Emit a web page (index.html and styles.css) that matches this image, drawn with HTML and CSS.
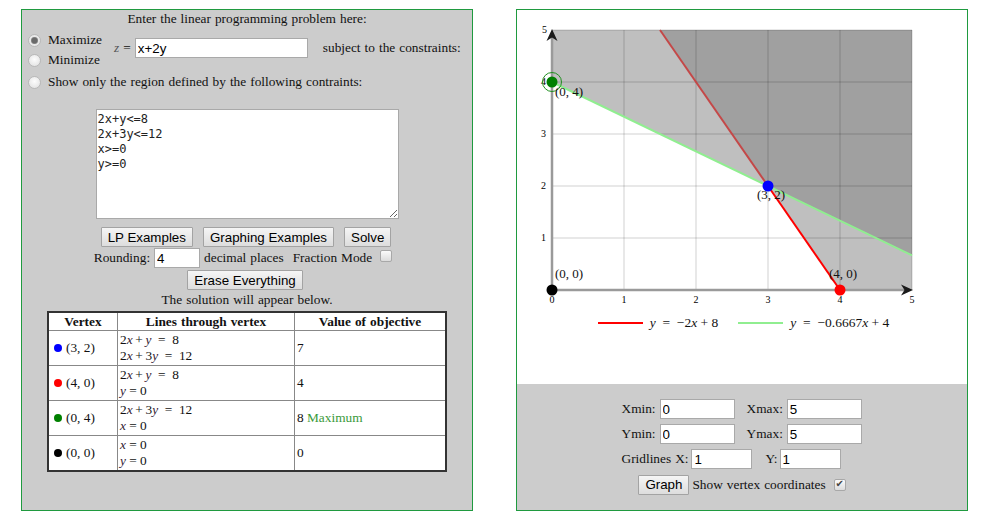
FILE: index.html
```html
<!DOCTYPE html>
<html lang="en">
<head>
    <meta charset="UTF-8">
    <title>Linear Programming Grapher</title>
    <link rel="stylesheet" href="styles.css">
</head>
<body>
<div class="page">

    <!-- Problem entry and solution table -->
    <div class="panel lp-panel">
        <div class="title">Enter the linear programming problem here:</div>

        <div class="objective-row">
            <div class="mode-choice">
                <label class="radio-line"><input type="radio" name="mode" checked>Maximize</label>
                <label class="radio-line"><input type="radio" name="mode">Minimize</label>
            </div>
            <span class="z-label"><i>z</i> =</span>
            <input type="text" class="objective" value="x+2y">
            <span class="subject">subject to the constraints:</span>
        </div>

        <label class="radio-line region-only"><input type="radio" name="mode">Show only the region defined by the following contraints:</label>

        <textarea class="constraints" spellcheck="false">2x+y<=8
2x+3y<=12
x>=0
y>=0</textarea>

        <div class="button-row">
            <button>LP Examples</button>
            <button>Graphing Examples</button>
            <button>Solve</button>
        </div>

        <div class="rounding-row">
            <span>Rounding:</span>
            <input type="text" class="rounding" value="4">
            <span>decimal places</span>
            <span class="fraction-label">Fraction Mode</span>
            <input type="checkbox" class="check">
        </div>

        <div class="erase-row">
            <button>Erase Everything</button>
        </div>

        <div class="note">The solution will appear below.</div>

        <table class="solution">
            <tr>
                <th class="col-vertex">Vertex</th>
                <th class="col-lines">Lines through vertex</th>
                <th>Value of objective</th>
            </tr>
            <tr>
                <td><span class="dot blue"></span>(3, 2)</td>
                <td>2<i>x</i>&thinsp;+&thinsp;<i>y</i>&nbsp; = &nbsp;8<br>2<i>x</i>&thinsp;+&thinsp;3<i>y</i>&nbsp; = &nbsp;12</td>
                <td>7</td>
            </tr>
            <tr>
                <td><span class="dot red"></span>(4, 0)</td>
                <td>2<i>x</i>&thinsp;+&thinsp;<i>y</i>&nbsp; = &nbsp;8<br><i>y</i> = 0</td>
                <td>4</td>
            </tr>
            <tr>
                <td><span class="dot green"></span>(0, 4)</td>
                <td>2<i>x</i>&thinsp;+&thinsp;3<i>y</i>&nbsp; = &nbsp;12<br><i>x</i> = 0</td>
                <td>8 <span class="max">Maximum</span></td>
            </tr>
            <tr>
                <td><span class="dot black"></span>(0, 0)</td>
                <td><i>x</i> = 0<br><i>y</i> = 0</td>
                <td>0</td>
            </tr>
        </table>
    </div>

    <!-- Graph and graph settings -->
    <div class="panel graph-panel">
        <div class="graph">
            <svg class="plot" width="450" height="300" viewBox="517 10 450 300">
                <!-- shaded (infeasible) regions -->
                <polygon points="552,82 552,30 660,30 768,186" fill="#bfbfbf"/>
                <polygon points="768,186 840,290 912,290 912,255.3" fill="#bfbfbf"/>
                <polygon points="660,30 912,30 912,255.3 768,186" fill="#a0a0a0"/>

                <!-- gridlines -->
                <g stroke="rgba(0,0,0,0.09)" stroke-width="2">
                    <line x1="624" y1="30" x2="624" y2="290"/>
                    <line x1="696" y1="30" x2="696" y2="290"/>
                    <line x1="768" y1="30" x2="768" y2="290"/>
                    <line x1="840" y1="30" x2="840" y2="290"/>
                    <line x1="912" y1="30" x2="912" y2="290"/>
                    <line x1="552" y1="238" x2="912" y2="238"/>
                    <line x1="552" y1="186" x2="912" y2="186"/>
                    <line x1="552" y1="134" x2="912" y2="134"/>
                    <line x1="552" y1="82" x2="912" y2="82"/>
                    <line x1="552" y1="30" x2="912" y2="30"/>
                </g>

                <!-- axes -->
                <line x1="552" y1="291" x2="552" y2="36" stroke="#9a9a9a" stroke-width="2.5"/>
                <line x1="551" y1="290" x2="906" y2="290" stroke="#9a9a9a" stroke-width="2.5"/>
                <path d="M552 29 L557.5 41 L552 37.5 L546.5 41 Z" fill="#1a1a1a"/>
                <path d="M913 290 L901 295.5 L904.5 290 L901 284.5 Z" fill="#1a1a1a"/>

                <!-- tick labels -->
                <g class="tick">
                    <text x="547" y="33" text-anchor="end">5</text>
                    <text x="546" y="85" text-anchor="end">4</text>
                    <text x="546" y="137" text-anchor="end">3</text>
                    <text x="546" y="189" text-anchor="end">2</text>
                    <text x="546" y="241" text-anchor="end">1</text>
                    <text x="552" y="303" text-anchor="middle">0</text>
                    <text x="624" y="303" text-anchor="middle">1</text>
                    <text x="696" y="303" text-anchor="middle">2</text>
                    <text x="768" y="303" text-anchor="middle">3</text>
                    <text x="840" y="303" text-anchor="middle">4</text>
                    <text x="912" y="303" text-anchor="middle">5</text>
                </g>

                <!-- constraint lines -->
                <line x1="660" y1="30" x2="768" y2="186" stroke="#c44848" stroke-width="2"/>
                <line x1="768" y1="186" x2="840" y2="290" stroke="#ff0000" stroke-width="2"/>
                <line x1="552" y1="82" x2="912" y2="255.3" stroke="#90ee90" stroke-width="2"/>

                <!-- vertices -->
                <circle cx="552" cy="82" r="9.5" fill="none" stroke="#1f8f1f" stroke-width="1"/>
                <circle cx="552" cy="82" r="5.5" fill="#008000"/>
                <circle cx="768" cy="186" r="5.5" fill="#0000ff"/>
                <circle cx="840" cy="290" r="5.5" fill="#ff0000"/>
                <circle cx="552" cy="290" r="5.5" fill="#000"/>

                <g class="vertex-label">
                    <text x="555" y="96">(0, 4)</text>
                    <text x="757" y="199">(3, 2)</text>
                    <text x="555" y="278">(0, 0)</text>
                    <text x="829" y="278">(4, 0)</text>
                </g>
            </svg>

            <div class="legend">
                <span class="swatch red-line"></span>
                <span class="legend-text"><i>y</i>&nbsp; = &nbsp;−2<i>x</i> + 8</span>
                <span class="swatch green-line"></span>
                <span class="legend-text"><i>y</i>&nbsp; = &nbsp;−0.6667<i>x</i> + 4</span>
            </div>
        </div>

        <div class="controls">
            <div class="range-block">
                <div class="control-row">
                    <span class="ctl-label">Xmin:</span>
                    <input type="text" class="range" value="0">
                    <span class="ctl-label second">Xmax:</span>
                    <input type="text" class="range" value="5">
                </div>
                <div class="control-row">
                    <span class="ctl-label">Ymin:</span>
                    <input type="text" class="range" value="0">
                    <span class="ctl-label second">Ymax:</span>
                    <input type="text" class="range" value="5">
                </div>
                <div class="control-row">
                    <span class="ctl-label tight">Gridlines X:</span>
                    <input type="text" class="grid-step" value="1">
                    <span class="ctl-label grid-y">Y:</span>
                    <input type="text" class="grid-step" value="1">
                </div>
            </div>
            <div class="control-row graph-row">
                <button>Graph</button>
                <span class="show-label">Show vertex coordinates</span>
                <input type="checkbox" class="check" checked>
            </div>
        </div>
    </div>

</div>
</body>
</html>
```

FILE: styles.css
```css
body {
    margin: 0;
    font-family: "Liberation Serif", "Times New Roman", serif;
    font-size: 13.33px;
    word-spacing: 0.7px;
    color: #111;
    background: #fff;
}

.page {
    display: flex;
    gap: 43px;
    padding: 9px 0 0 21px;
}

.panel {
    width: 450px;
    height: 500px;
    border: 1px solid #1f9a3f;
}

.lp-panel {
    background: #cccccc;
}

/* form controls */
input[type="text"] {
    box-sizing: border-box;
    height: 20px;
    margin: 0;
    padding: 0 2px;
    border: 1px solid #a9a9a9;
    background: #fff;
    font-family: "Liberation Sans", Arial, sans-serif;
    font-size: 13.33px;
    word-spacing: normal;
    color: #000;
}

button {
    box-sizing: border-box;
    height: 20px;
    margin: 0;
    padding: 0 6px;
    border: 1px solid #a3a3a3;
    border-radius: 1px;
    background: linear-gradient(#f5f5f5, #dddddd);
    font-family: "Liberation Sans", Arial, sans-serif;
    font-size: 13.33px;
    word-spacing: normal;
    color: #000;
}

.radio-line {
    display: flex;
    align-items: center;
    height: 20px;
    white-space: nowrap;
}

.radio-line input {
    appearance: none;
    box-sizing: border-box;
    width: 13px;
    height: 13px;
    margin: 0 7px 0 6px;
    border: 1px solid #b9b9b9;
    border-radius: 50%;
    background: radial-gradient(circle at 50% 40%, #fdfdfd, #dedede);
}

.radio-line input:checked {
    background: radial-gradient(circle, #6a6a6a 0 2.6px, #9a9a9a 3.4px, #e8e8e8 4px);
}

.check {
    appearance: none;
    box-sizing: border-box;
    width: 12px;
    height: 12px;
    margin: 0;
    border: 1px solid #a8a8a8;
    border-radius: 2px;
    background: linear-gradient(#fbfbfb, #dcdcdc);
    position: relative;
}

.check:checked::after {
    content: "✔";
    position: absolute;
    left: 1px;
    top: -2px;
    font-family: "DejaVu Sans", sans-serif;
    font-size: 10px;
    color: #444;
}

/* left panel */
.title {
    text-align: center;
    line-height: 18px;
}

.objective-row {
    display: flex;
    align-items: flex-start;
    margin-top: 2px;
}

.z-label {
    margin: 8px 4px 0 12px;
    line-height: 20px;
}

.z-label i {
    color: #555;
}

.objective {
    width: 173px;
    margin-top: 8px !important;
}

.subject {
    margin: 8px 0 0 15px;
    line-height: 20px;
}

.region-only {
    margin-top: 2px;
}

.constraints {
    display: block;
    box-sizing: border-box;
    width: 303px;
    height: 110px;
    margin: 17px auto 0;
    padding: 2px 1px;
    border: 1px solid #a9a9a9;
    font-family: "DejaVu Sans Mono", monospace;
    font-size: 12px;
    line-height: 15px;
    word-spacing: normal;
    color: #222;
}

.button-row {
    display: flex;
    justify-content: center;
    gap: 10px;
    margin-top: 8px;
    padding-right: 2px;
}

.rounding-row {
    display: flex;
    justify-content: center;
    align-items: center;
    gap: 4px;
    height: 20px;
    margin-top: 1px;
    padding-right: 8px;
}

.rounding {
    width: 46px;
}

.fraction-label {
    margin: 0 4px 0 5px;
}

.rounding-row .check {
    margin-top: -5px;
}

.erase-row {
    display: flex;
    justify-content: center;
    margin-top: 2px;
    padding-right: 4px;
}

.note {
    text-align: center;
    line-height: 20px;
}

.solution {
    width: 400px;
    margin: 1px auto 0;
    border-collapse: collapse;
    border: 2px solid #333;
    background: #fff;
}

.solution th {
    height: 17px;
    padding: 0;
    border: 1px solid #888;
    font-weight: bold;
    text-align: center;
}

.solution td {
    height: 34px;
    padding: 0 2px;
    border: 1px solid #888;
    line-height: 16px;
    vertical-align: middle;
    word-spacing: normal;
}

.col-vertex {
    width: 68px;
}

.col-lines {
    width: 176px;
}

.solution i {
    color: #331a33;
}

.dot {
    display: inline-block;
    width: 8px;
    height: 8px;
    margin: 0 4px 0 3px;
    border-radius: 50%;
}

.dot.blue { background: #0000ff; }
.dot.red { background: #ff0000; }
.dot.green { background: #008000; }
.dot.black { background: #000; }

.max {
    color: #3a9a3a;
}

/* right panel */
.graph-panel {
    display: flex;
    flex-direction: column;
}

.graph {
    height: 374px;
    background: #fff;
}

.plot {
    display: block;
}

.tick text {
    font-family: "Liberation Serif", serif;
    font-size: 10px;
    fill: #000;
}

.vertex-label text {
    font-family: "Liberation Serif", serif;
    font-size: 13px;
    word-spacing: normal;
    fill: #111;
}

.legend {
    display: flex;
    justify-content: center;
    align-items: center;
    height: 20px;
    margin-top: 3px;
    padding-left: 3px;
    font-size: 13.5px;
    word-spacing: normal;
}

.swatch {
    width: 45px;
    height: 2px;
    margin-right: 7px;
}

.red-line { background: #ff0000; }

.green-line {
    background: #90ee90;
    margin-left: 20px;
}

.legend-text {
    white-space: nowrap;
}

.controls {
    flex: 1;
    background: #cccccc;
    padding-top: 15px;
}

.range-block {
    width: 240px;
    margin: 0 auto;
    padding-right: 1px;
}

.control-row {
    display: flex;
    align-items: center;
    height: 20px;
    margin-bottom: 5px;
    white-space: nowrap;
}

.ctl-label {
    margin-right: 4px;
}

.ctl-label.second {
    margin-left: 12px;
}

.ctl-label.tight {
    margin-right: 3px;
}

.ctl-label.grid-y {
    margin: 0 2px 0 13px;
}

.range {
    width: 75px;
}

.grid-step {
    width: 61px;
}

.graph-row {
    justify-content: center;
    height: 21px;
}

.show-label {
    margin: 0 8px 0 3px;
}
```
